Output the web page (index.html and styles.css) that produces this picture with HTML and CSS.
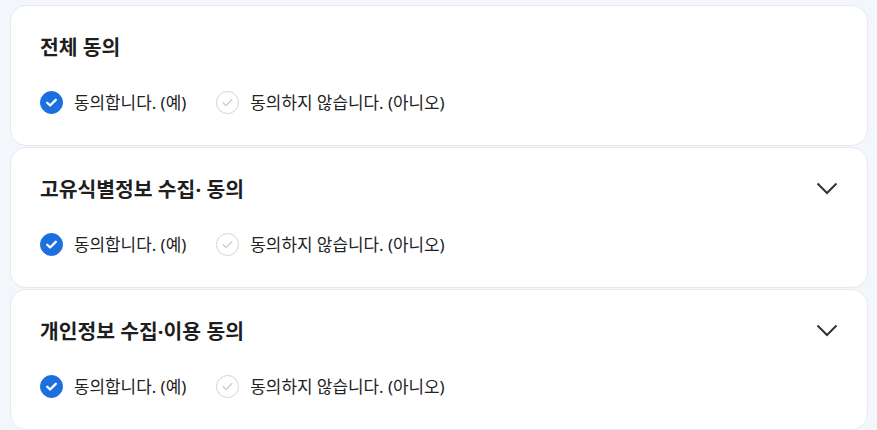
FILE: index.html
```html
<html>
	<head>
		<meta charset="utf-8">
		<title>약관 동의</title>
		<link rel="stylesheet" href="styles.css">
	</head>
	<body>
		<div class="agreeList">
			<div class="agreeBox">
				<div class="agreeHead">
					<h3 class="agreeTitle">전체 동의</h3>
				</div>
				<div class="agreeOpts">
					<label class="opt on"><span class="chk"><svg viewBox="0 0 22 22"><path d="M6.5 11.2l3 3 6-6" /></svg></span>동의합니다. (예)</label>
					<label class="opt"><span class="chk"><svg viewBox="0 0 22 22"><path d="M6.5 11.2l3 3 6-6" /></svg></span>동의하지 않습니다. (아니오)</label>
				</div>
			</div>
			<div class="agreeBox">
				<div class="agreeHead">
					<h3 class="agreeTitle">고유식별정보 수집· 동의</h3>
					<span class="arrow"><svg viewBox="0 0 22 14"><path d="M1.5 1.5l9.5 9.5 9.5-9.5" /></svg></span>
				</div>
				<div class="agreeOpts">
					<label class="opt on"><span class="chk"><svg viewBox="0 0 22 22"><path d="M6.5 11.2l3 3 6-6" /></svg></span>동의합니다. (예)</label>
					<label class="opt"><span class="chk"><svg viewBox="0 0 22 22"><path d="M6.5 11.2l3 3 6-6" /></svg></span>동의하지 않습니다. (아니오)</label>
				</div>
			</div>
			<div class="agreeBox">
				<div class="agreeHead">
					<h3 class="agreeTitle">개인정보 수집·이용 동의</h3>
					<span class="arrow"><svg viewBox="0 0 22 14"><path d="M1.5 1.5l9.5 9.5 9.5-9.5" /></svg></span>
				</div>
				<div class="agreeOpts">
					<label class="opt on"><span class="chk"><svg viewBox="0 0 22 22"><path d="M6.5 11.2l3 3 6-6" /></svg></span>동의합니다. (예)</label>
					<label class="opt"><span class="chk"><svg viewBox="0 0 22 22"><path d="M6.5 11.2l3 3 6-6" /></svg></span>동의하지 않습니다. (아니오)</label>
				</div>
			</div>
		</div>
	</body>
</html>
```
FILE: styles.css
```css
* {
	margin: 0;
	padding: 0;
	box-sizing: border-box;
}

body {
	background: #f3f6fa;
	font-family: "Noto Sans", "Noto Sans CJK KR", sans-serif;
	color: #222;
}

.agreeList {
	display: flex;
	flex-direction: column;
	gap: 1px;
	padding: 5px 9px 0 10px;
}

.agreeBox {
	background: #fff;
	border: 1px solid #e6eaf0;
	border-radius: 16px;
	height: 141px;
	padding: 29px 29px 0;
}

.agreeHead {
	display: flex;
	align-items: center;
	justify-content: space-between;
	height: 24px;
}

.agreeTitle {
	font-size: 20.4px;
	font-weight: 700;
	line-height: 24px;
	color: #1e1e1e;
}

.arrow {
	width: 22px;
	height: 14px;
	display: flex;
}

.arrow svg {
	width: 22px;
	height: 14px;
	fill: none;
	stroke: #333;
	stroke-width: 2;
}

.agreeOpts {
	display: flex;
	gap: 30px;
	margin-top: 32px;
}

.opt {
	display: flex;
	align-items: center;
	gap: 11px;
	font-size: 16.9px;
	line-height: 22px;
	color: #222;
}

.chk {
	width: 23px;
	height: 23px;
	border-radius: 50%;
	border: 1px solid #d4d4d4;
	background: #fff;
	display: flex;
}

.chk svg {
	width: 100%;
	height: 100%;
	fill: none;
	stroke: #cfcfcf;
	stroke-width: 1.6;
	stroke-linecap: round;
	stroke-linejoin: round;
}

.on .chk {
	background: #1b6fdf;
	border-color: #1b6fdf;
}

.on .chk svg {
	stroke: #fff;
	stroke-width: 2.4;
}
```
